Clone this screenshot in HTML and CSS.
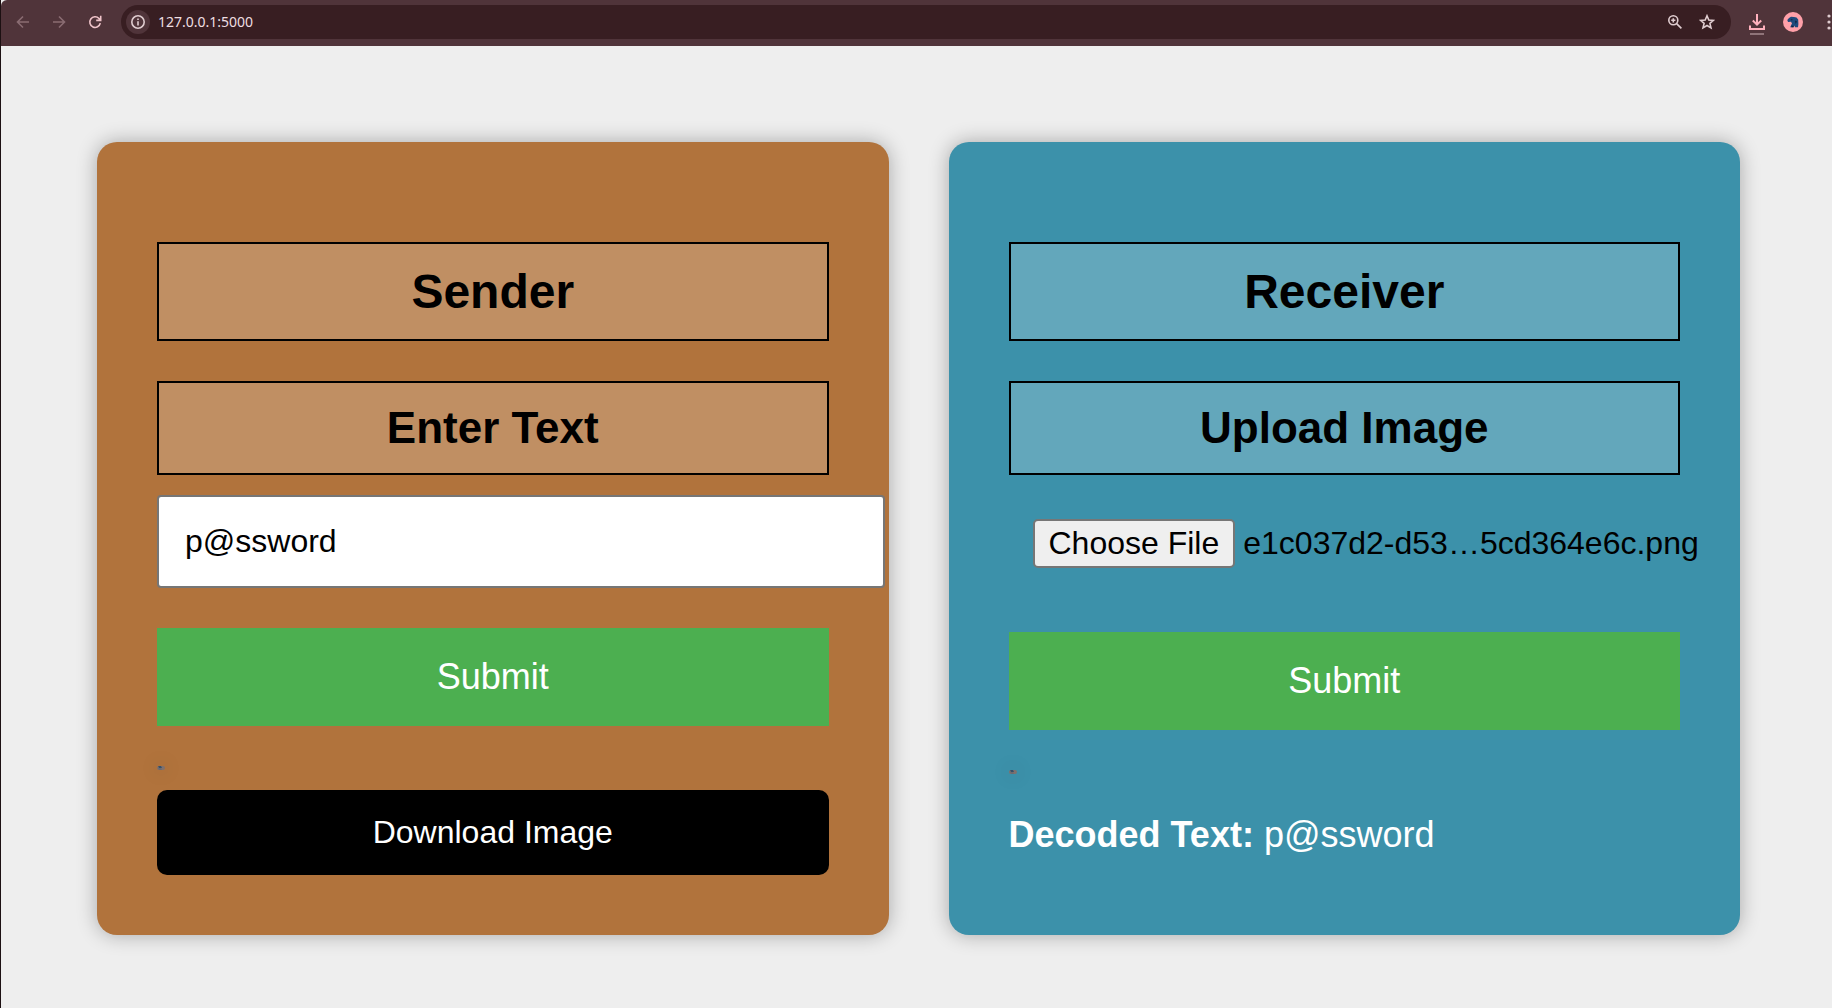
FILE: index.html
```html
<!DOCTYPE html>
<html lang="en">
<head>
<meta charset="utf-8">
<title>127.0.0.1:5000</title>
<link rel="stylesheet" href="styles.css">
</head>
<body>
<div class="window">
  <header class="toolbar">
    <button class="tool dim" type="button" aria-label="Back">
      <svg width="14" height="14" viewBox="0 0 14 14"><path d="M13 7H2M7 1.5L1.5 7L7 12.5"/></svg>
    </button>
    <button class="tool dim" type="button" aria-label="Forward">
      <svg width="14" height="14" viewBox="0 0 14 14"><path d="M1 7h11M7 1.5L12.5 7L7 12.5"/></svg>
    </button>
    <button class="tool" type="button" aria-label="Reload">
      <svg width="14" height="14" viewBox="0 0 14 14"><path d="M12.3 8.2A5.3 5.3 0 1 1 11 3.5L12.6 5.2M12.7 .8V5.4H8.2"/></svg>
    </button>
    <div class="omnibox">
      <button class="site-info" type="button" aria-label="Site information">
        <svg width="14" height="14" viewBox="0 0 14 14"><circle cx="7" cy="7" r="6.2"/><path d="M7 6.2v4.2M7 3.4v1.6"/></svg>
      </button>
      <input class="address" type="text" value="127.0.0.1:5000" aria-label="Address">
      <button class="inner-tool" type="button" aria-label="Zoom">
        <svg width="14" height="14" viewBox="0 0 14 14"><circle cx="5.3" cy="5.3" r="4.5"/><path d="M8.6 8.6L13.4 13.4M5.3 3.2v4.2M3.2 5.3h4.2"/></svg>
      </button>
      <button class="inner-tool" type="button" aria-label="Bookmark">
        <svg width="16" height="16" viewBox="0 0 16 16"><path d="M8 1.8L9.8 6L14.4 6.4L10.9 9.4L12 13.9L8 11.5L4 13.9L5.1 9.4L1.6 6.4L6.2 6Z"/></svg>
      </button>
    </div>
    <button class="tool pink" type="button" aria-label="Downloads">
      <svg width="16" height="22" viewBox="0 0 16 22"><path d="M8 0V10.5M3.8 6.5L8 10.7L12.2 6.5M1 11.5V15H15V11.5"/><path class="progress" d="M1 20H15"/></svg>
    </button>
    <button class="tool" type="button" aria-label="Profile">
      <svg class="avatar" width="20" height="20" viewBox="0 0 20 20"><circle class="disc" cx="10" cy="10" r="10"/><path class="critter" d="M4.3 8L6 6L8 4.8L11 5L13.5 5.6L15.2 7.5L15.4 12L15 15.2H12L11.6 13.6L10.8 15.2H7.2L8.2 13L9 11.5L8 9.8L5 10Z"/><path class="shade" d="M7.5 7l2.2.4l-.8 1.4zM12 8.6l2 1l-1.4 2.4zM8.4 13.8h2v1.4h-2z"/></svg>
    </button>
    <button class="tool menu" type="button" aria-label="Menu">
      <svg class="dots" width="4" height="16" viewBox="0 0 4 16"><circle cx="2" cy="2" r="1.6"/><circle cx="2" cy="8" r="1.6"/><circle cx="2" cy="14" r="1.6"/></svg>
    </button>
  </header>

  <main class="panels">
    <section class="panel sender">
      <h1 class="title">Sender</h1>
      <form class="form" onsubmit="return false">
        <h2 class="subtitle"><label for="message">Enter Text</label></h2>
        <input class="text-field" id="message" type="text" value="p@ssword">
        <button class="submit" type="submit">Submit</button>
      </form>
      <svg class="thumb" width="8" height="4" viewBox="0 0 8 4" role="img" aria-label="Encoded image"><path class="thumb-b" d="M0 0H8V4H0Z"/><path class="thumb-a" d="M1 0H4L5 2H2Z"/><path class="thumb-c" d="M1 2H4L5 4H2Z"/></svg>
      <a class="download" href="#download">Download Image</a>
    </section>

    <section class="panel receiver">
      <h1 class="title">Receiver</h1>
      <form class="form" onsubmit="return false">
        <h2 class="subtitle">Upload Image</h2>
        <div class="file-field">
          <input class="file-input" id="image" type="file" accept="image/png">
          <label class="file-button" for="image">Choose File</label>
          <span class="file-name">e1c037d2-d53…5cd364e6c.png</span>
        </div>
        <button class="submit" type="submit">Submit</button>
      </form>
      <svg class="thumb" width="8" height="4" viewBox="0 0 8 4" role="img" aria-label="Uploaded image"><path class="thumb-b" d="M0 0H8V4H0Z"/><path class="thumb-a" d="M1 0H4L5 2H2Z"/><path class="thumb-c" d="M1 2H4L5 4H2Z"/></svg>
      <p class="decoded"><strong>Decoded Text:</strong> p@ssword</p>
    </section>
  </main>
</div>
</body>
</html>
```
FILE: styles.css
```css
* {
  box-sizing: border-box;
}

body {
  margin: 0;
  background: #eee;
  color: #000;
  font-family: "Liberation Sans", Arial, sans-serif;
}

.window {
  min-height: 100vh;
  border-left: 1px solid #1c1012;
}

/* Browser toolbar */
.toolbar {
  display: flex;
  align-items: center;
  height: 46px;
  padding: 0 0 2px 4px;
  overflow: hidden;
  background: #50343a;
  border-top-left-radius: 6px;
}

.tool {
  display: flex;
  flex: none;
  align-items: center;
  justify-content: center;
  width: 36px;
  height: 36px;
  padding: 0;
  border: 0;
  background: none;
  color: #f0c4ca;
}

.toolbar svg {
  fill: none;
  stroke: currentColor;
  stroke-width: 1.6;
}

.toolbar .dim {
  color: #8a6c72;
}

.toolbar .pink {
  color: #ffb1bd;
}

.toolbar .pink svg {
  stroke-width: 2;
  margin-top: 6px;
}

.toolbar .progress {
  stroke: #8f7479;
}

.omnibox {
  display: flex;
  flex: 1;
  align-items: center;
  height: 34px;
  margin: 0 8px;
  padding: 0 8px 0 5px;
  border-radius: 17px;
  background: #381e22;
}

.site-info,
.inner-tool {
  display: flex;
  flex: none;
  align-items: center;
  justify-content: center;
  padding: 0;
  border: 0;
  background: none;
  color: #e0cdd0;
}

.site-info {
  width: 24px;
  height: 24px;
  border-radius: 50%;
  background: #50343a;
}

.inner-tool {
  width: 32px;
  height: 32px;
}

.address {
  flex: 1;
  min-width: 0;
  padding: 0 8px;
  border: 0;
  background: none;
  color: #eedfe1;
  font: 14px/20px "Noto Sans", sans-serif;
}

.toolbar .avatar,
.toolbar .dots {
  stroke: none;
}

.disc {
  fill: #ffa0a9;
}

.critter {
  fill: #1f4a7c;
}

.shade {
  fill: #14233f;
}

.menu {
  margin-right: -15px;
}

.toolbar .dots {
  fill: #e0cdd0;
}

/* Panels */
.panels {
  display: grid;
  grid-template-columns: 1fr 1fr;
  gap: 60px;
  padding: 96px 92px 72px 96px;
}

.panel {
  display: flex;
  flex-direction: column;
  min-width: 0;
  padding: 100px 60px 60px;
  border-radius: 20px;
  box-shadow: 0 0 20px rgba(0, 0, 0, 0.3);
}

.sender {
  background: #b1733c;
}

.receiver {
  background: #3c91aa;
}

.title,
.subtitle {
  margin: 0;
  padding: 20px;
  border: 2px solid #000;
  background: rgba(255, 255, 255, 0.2);
  text-align: center;
}

.title {
  margin-bottom: 40px;
  font-size: 48px;
  line-height: 55px;
}

.subtitle {
  margin-bottom: 20px;
  font-size: 44px;
  line-height: 50px;
}

.form {
  display: flex;
  flex-direction: column;
}

/* The field's padding and border extend past the column */
.text-field {
  box-sizing: content-box;
  width: 100%;
  height: 37px;
  padding: 26px;
  border: 2px solid #767676;
  border-radius: 4px;
  background: #fff;
  color: #000;
  font: 32px/37px "Liberation Sans", Arial, sans-serif;
}

.file-field {
  display: flex;
  align-items: center;
  gap: 8px;
  height: 97px;
  padding-left: 24px;
  font-size: 32px;
  line-height: 37px;
  white-space: nowrap;
}

.file-input {
  position: absolute;
  width: 1px;
  height: 1px;
  overflow: hidden;
  opacity: 0;
}

.file-button {
  padding: 4px 14px;
  border: 2px solid #767676;
  border-radius: 5px;
  background: #efefef;
}

.submit {
  margin: 40px 0;
  padding: 28px;
  border: 0;
  background: #4caf50;
  color: #fff;
  font: 36px/42px "Liberation Sans", Arial, sans-serif;
}

.thumb {
  display: block;
  border-radius: 2px;
  box-shadow: 0 0 20px rgba(0, 0, 0, 0.3);
}

.thumb-a {
  fill: #35506a;
}

.thumb-b {
  fill: #80706c;
}

.thumb-c {
  fill: #6b6a70;
}

.download {
  margin-top: 20px;
  padding: 24px;
  border-radius: 10px;
  background: #000;
  color: #fff;
  font-size: 32px;
  line-height: 37px;
  text-align: center;
  text-decoration: none;
}

.decoded {
  margin: 40px 0 0;
  color: #fff;
  font-size: 36px;
  line-height: 42px;
}
```
